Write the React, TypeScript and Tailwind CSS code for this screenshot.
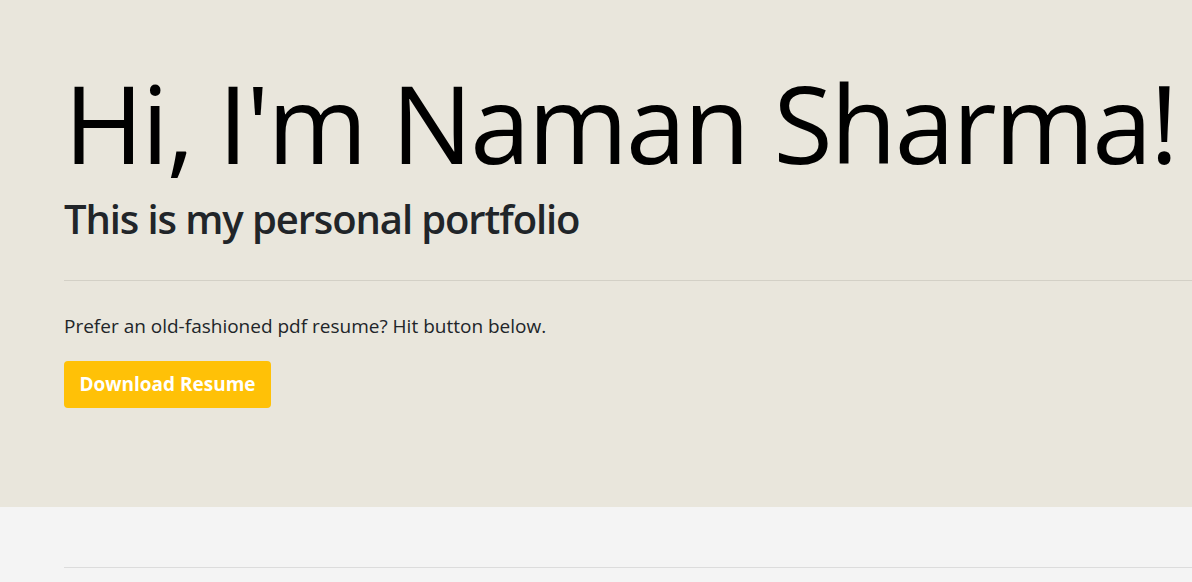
export default function App() {
  return (
    <div className="min-h-screen bg-[#f4f4f4] font-['Open_Sans',sans-serif] overflow-hidden">
      {/* jumbotron */}
      <div className="bg-[#e9e6dc] h-[507px] pl-16 pt-[54px]">
        <h1 className="text-[108px] leading-[138px] font-normal tracking-[-2.2px] text-black whitespace-nowrap">
          Hi, I'm Naman Sharma!
        </h1>
        <h2 className="text-[40px] leading-[48px] font-semibold tracking-[-1.1px] text-[#212529] mt-[3px]">
          This is my personal portfolio
        </h2>
        <hr className="border-0 border-t border-[#d3d0c6] mt-[37px] mb-[32px]" />
        <p className="text-[19px] leading-[27px] text-[#212529]">
          Prefer an old-fashioned pdf resume? Hit button below.
        </p>
        <button
          type="button"
          className="mt-[21px] h-[47px] w-[207px] rounded-[4px] bg-[#ffc107] text-white text-[19px] font-bold"
        >
          Download Resume
        </button>
      </div>
      <div className="pl-16 pt-[60px]">
        <hr className="border-0 border-t border-[#dcdcdc]" />
      </div>
    </div>
  );
}
